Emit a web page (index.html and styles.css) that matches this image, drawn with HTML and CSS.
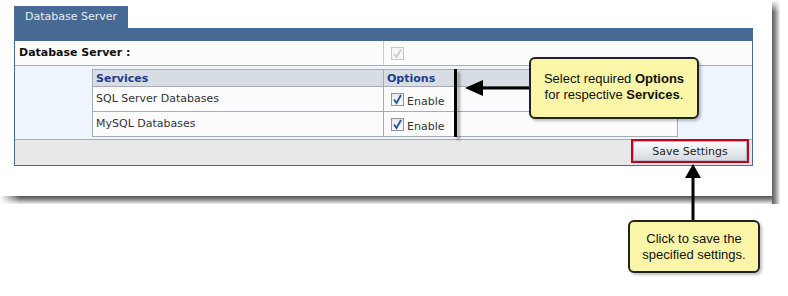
FILE: index.html
```html
<!DOCTYPE html>
<html lang="en">
<head>
    <meta charset="UTF-8">
    <title>Database Server Settings</title>
    <link rel="stylesheet" href="styles.css">
</head>
<body>
    <div class="shot">
        <div class="tab">Database Server</div>
        <div class="frame">
            <div class="row-main">
                <div class="label">Database Server :</div>
                <div class="value">
                    <span class="check disabled">
                        <svg width="11" height="11" viewBox="0 0 11 11"><path d="M2 6 L4.5 9 L9 1.5" fill="none" stroke="#c4cbd6" stroke-width="1.6"/></svg>
                    </span>
                </div>
            </div>
            <div class="row-services">
                <div class="services">
                    <div class="srv-row srv-head">
                        <div class="col-name">Services</div>
                        <div class="col-opt">Options</div>
                    </div>
                    <div class="srv-row">
                        <div class="col-name">SQL Server Databases</div>
                        <div class="col-opt">
                            <span class="check">
                                <svg width="11" height="11" viewBox="0 0 11 11"><path d="M2 5.5 L4.5 9 L9 1" fill="none" stroke="#2f4f9a" stroke-width="1.8"/></svg>
                            </span>
                            <span class="enable">Enable</span>
                        </div>
                    </div>
                    <div class="srv-row">
                        <div class="col-name">MySQL Databases</div>
                        <div class="col-opt">
                            <span class="check">
                                <svg width="11" height="11" viewBox="0 0 11 11"><path d="M2 5.5 L4.5 9 L9 1" fill="none" stroke="#2f4f9a" stroke-width="1.8"/></svg>
                            </span>
                            <span class="enable">Enable</span>
                        </div>
                    </div>
                </div>
            </div>
            <div class="footer">
                <div class="save-box">
                    <button class="save">Save Settings</button>
                </div>
            </div>
        </div>
    </div>

    <!-- annotations over the screenshot -->
    <div class="marker"></div>
    <svg class="arrow arrow-left" width="70" height="20" viewBox="0 0 70 20">
        <path d="M16 10 H70" stroke="#000" stroke-width="3"/>
        <path d="M0 10 L18 2 L18 18 Z" fill="#000"/>
    </svg>
    <div class="callout callout-options">Select required <b>Options</b><br>for respective <b>Services</b>.</div>

    <svg class="arrow arrow-up" width="20" height="58" viewBox="0 0 20 58">
        <path d="M10 12 V58" stroke="#000" stroke-width="3"/>
        <path d="M10 0 L2 14 L18 14 Z" fill="#000"/>
    </svg>
    <div class="callout callout-save">Click to save the<br>specified settings.</div>
</body>
</html>
```

FILE: styles.css
```css
body {
    margin: 0;
    background-color: #fff;
    font-family: 'DejaVu Sans', Verdana, sans-serif;
    font-size: 11px;
    color: #333;
}

/* white screenshot panel with its drop shadow on the right and bottom */
.shot {
    width: 758px;
    height: 190px;
    padding: 6px 8px 8px 14px;
    background:
        linear-gradient(#fff, #fff) 0 0 / 772px 196px no-repeat,
        linear-gradient(#fff, rgba(255, 255, 255, 0)) 772px 0 / 8px 12px no-repeat,
        linear-gradient(to right, #fff, rgba(255, 255, 255, 0)) 0 196px / 20px 8px no-repeat,
        linear-gradient(to right, #5e5e5e, #8c8c8c 40%, #c8c8c8 75%, #f2f2f2) 772px 0 / 8px 204px no-repeat,
        linear-gradient(#555, #858585 40%, #c4c4c4 75%, #f2f2f2) 0 196px / 772px 8px no-repeat,
        #fff;
}

.tab {
    width: 103px;
    height: 22px;
    padding-left: 11px;
    line-height: 22px;
    background-color: #476a94;
    color: #e6edf5;
}

.frame {
    width: 737px;
    border: 1px solid #476a94;
    border-top: 13px solid #476a94;
}

.row-main {
    display: flex;
    height: 24px;
    background-color: #fcfcfc;
    border-bottom: 1px solid #a8acb2;
}

.label {
    width: 364px;
    padding-left: 4px;
    line-height: 24px;
    font-weight: bold;
    color: #111;
    border-right: 1px solid #c8ccd2;
}

.value {
    padding: 6px 0 0 7px;
}

.check {
    display: inline-block;
    width: 11px;
    height: 11px;
    border: 1px solid #8c96a4;
    background: linear-gradient(#e4e8ee, #fafbfc);
}

.check svg {
    display: block;
}

.check.disabled {
    border-color: #c4c8ce;
    background: #f4f5f7;
}

.row-services {
    background-color: #eef5fd;
    padding: 3px 0 2px 77px;
}

.services {
    width: 584px;
    border: 1px solid #a8acb2;
    border-bottom: none;
    background-color: #fcfcfc;
}

.srv-row {
    display: flex;
    height: 24px;
    border-bottom: 1px solid #a8acb2;
}

.srv-head {
    height: 16px;
    font-weight: bold;
    color: #1a3f8c;
    background-color: #d8dde3;
}

.col-name {
    width: 287px;
    padding-left: 3px;
    display: flex;
    align-items: center;
    border-right: 1px solid #a8acb2;
}

.srv-row .col-name {
    padding-bottom: 2px;
}

.srv-head .col-name {
    padding-bottom: 0;
}

.col-opt {
    display: flex;
    align-items: center;
    gap: 3px;
    padding-left: 7px;
}

.srv-head .col-opt {
    padding-left: 3px;
}

.enable {
    padding-top: 5px;
}

.footer {
    display: flex;
    justify-content: flex-end;
    height: 25px;
    background-color: #e8e8e8;
    border-top: 1px solid #a8acb2;
}

.save-box {
    margin: -1px 3px 0 0;
    border: 2px solid #c4001c;
    height: 20px;
}

.save {
    width: 114px;
    height: 20px;
    border: 1px solid #b6bcc4;
    background: linear-gradient(#fafbfc, #d6dae0);
    font-family: 'DejaVu Sans', Verdana, sans-serif;
    font-size: 11px;
    color: #222;
    padding: 0;
}

.marker {
    position: absolute;
    left: 454px;
    top: 69px;
    width: 3px;
    height: 68px;
    background-color: #000;
    box-shadow: 3px 3px 3px rgba(0, 0, 0, 0.35);
}

.arrow {
    position: absolute;
}

.arrow-left {
    left: 465px;
    top: 78px;
}

.arrow-up {
    left: 683px;
    top: 164px;
}

.callout {
    position: absolute;
    box-sizing: border-box;
    border: 2px solid #222;
    border-radius: 6px;
    background-color: #fbf5a8;
    font-family: 'Liberation Sans', Arial, sans-serif;
    font-size: 13px;
    line-height: 16px;
    color: #111;
    text-align: center;
    box-shadow: 2px 2px 3px rgba(0, 0, 0, 0.25);
}

.callout-options {
    left: 529px;
    top: 57px;
    width: 170px;
    height: 62px;
    padding-top: 12px;
}

.callout-save {
    left: 628px;
    top: 220px;
    width: 132px;
    height: 53px;
    padding-top: 9px;
}
```
